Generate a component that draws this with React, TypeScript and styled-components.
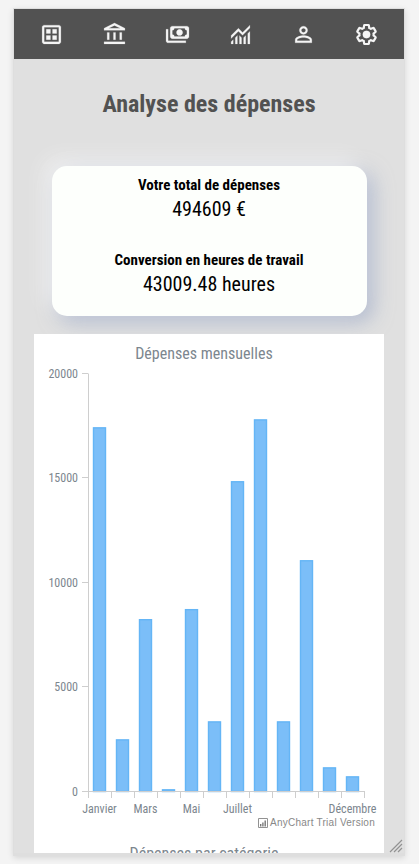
import React from 'react';
import styled, { createGlobalStyle } from 'styled-components';

const GlobalStyle = createGlobalStyle`
  * { box-sizing: border-box; }
  body {
    margin: 0;
    background: #f4f4f4;
    font-family: 'Roboto Condensed', Roboto, sans-serif;
    font-stretch: 75%;
  }
`;

const Page = styled.div`
  height: 864px;
  padding: 8px 14px 8px 13px;
  overflow: hidden;
`;

const Device = styled.div`
  display: flex;
  flex-direction: column;
  width: 392px;
  height: 848px;
  border: 1px solid #dedede;
  border-bottom-width: 3px;
  background: #e0e0e0;
  box-shadow: 0 2px 6px rgba(0, 0, 0, 0.12);
  overflow: hidden;
  position: relative;
`;

const NavBar = styled.nav`
  display: flex;
  flex: none;
  align-items: center;
  justify-content: space-between;
  height: 50px;
  padding: 0 25px;
  background: #525252;
`;

const NavIcon = styled.svg`
  width: 25px;
  height: 25px;
  fill: #f5f5f5;
  stroke: #f5f5f5;
  stroke-width: 0.2;
`;

const Content = styled.main`
  display: flex;
  flex: 1;
  min-height: 0;
  flex-direction: column;
  align-items: center;
`;

const Title = styled.h1`
  margin: 30px 0 0;
  height: 77px;
  font-size: 24px;
  line-height: 30px;
  font-weight: 700;
  color: #525252;
  white-space: nowrap;
`;

const SummaryCard = styled.section`
  display: flex;
  flex: none;
  flex-direction: column;
  width: 315px;
  height: 150px;
  padding-top: 7px;
  border-radius: 15px;
  background: #fdfffc;
  text-align: center;
  box-shadow: -8px -8px 20px rgba(255, 255, 255, 0.5), 6px 6px 20px rgba(145, 160, 195, 0.6);
`;

const Figure = styled.div`
  flex: none;
  color: #000;

  & + & {
    margin-top: 27px;
  }
`;

const FigureLabel = styled.div`
  font-size: 15px;
  line-height: 24px;
  font-weight: 700;
`;

const FigureValue = styled.div`
  font-size: 20px;
  line-height: 24px;
`;

const Charts = styled.section`
  flex: none;
  width: 350px;
  height: 519px;
  margin-top: 18px;
  background: #fff;
  overflow: hidden;
  position: relative;
`;

const Heading = styled.h2<{ $top: number }>`
  margin: ${(p) => p.$top}px 10px 0 0;
  font-size: 16px;
  line-height: 20px;
  font-weight: 400;
  text-align: center;
  color: #7c868e;
`;

const Plot = styled.svg`
  display: block;
  width: 350px;
  height: 453px;
  text {
    font-size: 12px;
    fill: #7c868e;
  }
`;

const Credits = styled.div`
  display: flex;
  align-items: center;
  justify-content: flex-end;
  gap: 2px;
  height: 12px;
  padding-right: 9px;
  font: 10px/12px Verdana, 'Liberation Sans', Arial, sans-serif;
  letter-spacing: 0.25px;
  color: #888;
`;

const Grip = styled.svg`
  position: absolute;
  right: 1px;
  bottom: 0;
  width: 14px;
  height: 14px;
  stroke: #929292;
  stroke-width: 1.2;
`;

const GEAR =
  'M19.43 12.98c.04-.32.07-.64.07-.98 0-.34-.03-.66-.07-.98l2.11-1.65c.19-.15.24-.42.12-.64l-2-3.46c-.09-.16-.26-.25-.44-.25-.06 0-.12.01-.17.03l-2.49 1c-.52-.4-1.08-.73-1.69-.98l-.38-2.65C14.46 2.18 14.25 2 14 2h-4c-.25 0-.46.18-.49.42l-.38 2.65c-.61.25-1.17.59-1.69.98l-2.49-1c-.06-.02-.12-.03-.18-.03-.17 0-.34.09-.43.25l-2 3.46c-.13.22-.07.49.12.64l2.11 1.65c-.04.32-.07.65-.07.98 0 .33.03.66.07.98l-2.11 1.65c-.19.15-.24.42-.12.64l2 3.46c.09.16.26.25.44.25.06 0 .12-.01.17-.03l2.49-1c.52.4 1.08.73 1.69.98l.38 2.65c.03.24.24.42.49.42h4c.25 0 .46-.18.49-.42l.38-2.65c.61-.25 1.17-.59 1.69-.98l2.49 1c.06.02.12.03.18.03.17 0 .34-.09.43-.25l2-3.46c.12-.22.07-.49-.12-.64l-2.11-1.65z';

const months = ['Janvier', 'Février', 'Mars', 'Avril', 'Mai', 'Juin', 'Juillet', 'Août', 'Septembre', 'Octobre', 'Novembre', 'Décembre'];
const amounts = [17400, 2470, 8220, 80, 8700, 3330, 14820, 17780, 3330, 11040, 1130, 700];
const labelled: Record<number, number> = { 0: 65.5, 2: 111.5, 4: 157.5, 6: 203.5, 11: 318.5 };
const BASELINE = 427.5;
const SCALE = 418 / 20000;

function Icons() {
  return (
    <>
      <NavIcon viewBox="0 0 24 24">
        <path d="M19 3H5c-1.1 0-2 .9-2 2v14c0 1.1.9 2 2 2h14c1.1 0 2-.9 2-2V5c0-1.1-.9-2-2-2zm0 16H5V5h14v14zM7 7h4v4H7zM13 7h4v4h-4zM7 13h4v4H7zM13 13h4v4h-4z" />
      </NavIcon>
      <NavIcon viewBox="0 0 24 24">
        <path d="M5 17v-7h2v7H5zm6 0v-7h2v7h-2zM2 21v-2h20v2H2zm15-4v-7h2v7h-2zM2 8V6l10-5 10 5v2H2zm4.45-2h11.1L12 3.25 6.45 6z" />
      </NavIcon>
      <NavIcon viewBox="0 0 24 24">
        <path d="M14 13c-1.66 0-3-1.34-3-3s1.34-3 3-3 3 1.34 3 3-1.34 3-3 3zM7 16c-1.1 0-2-.9-2-2V6c0-1.1.9-2 2-2h14c1.1 0 2 .9 2 2v8c0 1.1-.9 2-2 2H7zm2-2h10c0-1.1.9-2 2-2V8c-1.1 0-2-.9-2-2H9c0 1.1-.9 2-2 2v4c1.1 0 2 .9 2 2zm11 6H3c-1.1 0-2-.9-2-2V7h2v11h17v2z" />
      </NavIcon>
      <NavIcon viewBox="0 0 24 24">
        <path d="M3 21v-2l2-2v4H3zm4 0v-6l2-2v8H7zm4 0v-8l2 2.025V21h-2zm4 0v-5.975l2-2V21h-2zm4 0V11l2-2v12h-2zM3 15.825V13l7-7 4 4 7-7v2.825l-7 7-4-4-7 7z" />
      </NavIcon>
      <NavIcon viewBox="0 0 24 24">
        <path d="M12 5.9c1.16 0 2.1.94 2.1 2.1s-.94 2.1-2.1 2.1S9.9 9.16 9.9 8s.94-2.1 2.1-2.1m0 9c2.97 0 6.1 1.46 6.1 2.1v1.1H5.9V17c0-.64 3.13-2.1 6.1-2.1M12 4C9.79 4 8 5.79 8 8s1.79 4 4 4 4-1.79 4-4-1.79-4-4-4zm0 9c-2.67 0-8 1.34-8 4v3h16v-3c0-2.66-5.33-4-8-4z" />
      </NavIcon>
      <NavIcon viewBox="0 0 24 24">
        <path d={GEAR} transform="translate(12 12) scale(.91) translate(-12 -12)" fill="none" strokeWidth="2.3" />
        <circle cx="12" cy="12" r="3.6" />
      </NavIcon>
    </>
  );
}

function MonthlyChart() {
  return (
    <Plot viewBox="0 0 350 453">
      {amounts.map((v, i) => {
        const h = v * SCALE;
        return (
          <rect
            key={months[i]}
            x={59.5 + i * 23}
            y={BASELINE - h}
            width={12}
            height={h}
            fill="#7bbef8"
            stroke="#64b5f6"
            strokeWidth={1.4}
          />
        );
      })}
      <path
        d={
          'M54.5 9.5V427.5M54 427.5H330.5' +
          [0, 1, 2, 3, 4].map((n) => `M48 ${Math.floor(9 + n * 104.5) + 0.5}H54`).join('') +
          Array.from({ length: 13 }, (_, n) => `M${54.5 + n * 23} 427V434`).join('')
        }
        stroke="#cecece"
        fill="none"
      />
      {[20000, 15000, 10000, 5000, 0].map((v, n) => (
        <text key={v} x={44} y={13.5 + n * 104.5} textAnchor="end">
          {v}
        </text>
      ))}
      {Object.entries(labelled).map(([i, x]) => (
        <text key={i} x={x} y={449} textAnchor="middle">
          {months[Number(i)]}
        </text>
      ))}
    </Plot>
  );
}

export default function App() {
  return (
    <Page>
      <GlobalStyle />
      <Device>
        <NavBar>
          <Icons />
        </NavBar>
        <Content>
          <Title>Analyse des dépenses</Title>
          <SummaryCard>
            <Figure>
              <FigureLabel>Votre total de dépenses</FigureLabel>
              <FigureValue>494609 €</FigureValue>
            </Figure>
            <Figure>
              <FigureLabel>Conversion en heures de travail</FigureLabel>
              <FigureValue>43009.48 heures</FigureValue>
            </Figure>
          </SummaryCard>
          <Charts>
            <Heading $top={10}>Dépenses mensuelles</Heading>
            <MonthlyChart />
            <Credits>
              <svg width="10" height="10" viewBox="0 0 10 10">
                <path d="M.5.5h9v9h-9z" fill="none" stroke="#929292" />
                <path d="M2 6h1.4v2.5H2zM4.2 4.5h1.4v4H4.2zM6.5 2.5h1.4v6H6.5z" fill="#777" />
              </svg>
              AnyChart Trial Version
            </Credits>
            <Heading $top={15}>Dépenses par catégorie</Heading>
          </Charts>
        </Content>
        <Grip viewBox="0 0 14 14">
          <path d="M1 13L13 1M5 13L13 5M9 13L13 9" />
        </Grip>
      </Device>
    </Page>
  );
}
